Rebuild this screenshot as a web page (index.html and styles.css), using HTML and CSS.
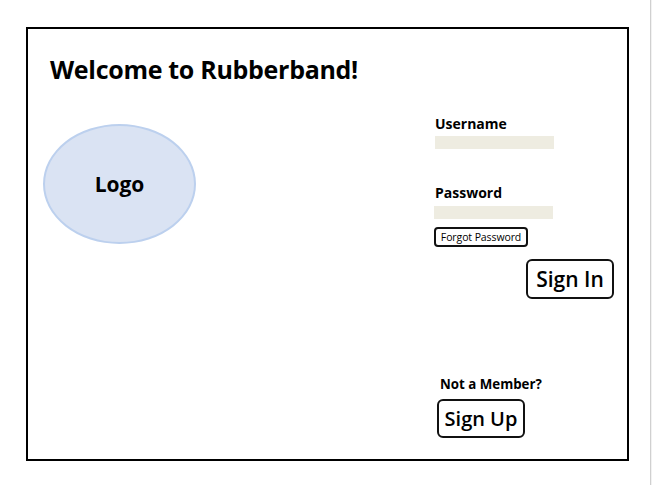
FILE: index.html
```html
<!DOCTYPE html>
<html lang="en">
<head>
<meta charset="utf-8">
<title>Welcome to Rubberband!</title>
<link rel="stylesheet" href="styles.css">
</head>
<body>
<div class="page">
  <main class="frame">
    <section class="left">
      <h1 class="title">Welcome to Rubberband!</h1>
      <div class="logo">Logo</div>
    </section>
    <section class="right">
      <label class="label user-label" for="username">Username</label>
      <input class="field user-field" id="username" type="text">
      <label class="label pass-label" for="password">Password</label>
      <input class="field pass-field" id="password" type="password">
      <button class="btn-small" type="button">Forgot Password</button>
      <button class="btn-big sign-in" type="button">Sign In</button>
      <p class="member">Not a Member?</p>
      <button class="btn-big sign-up" type="button">Sign Up</button>
    </section>
  </main>
</div>
</body>
</html>
```

FILE: styles.css
```css
* { box-sizing: border-box; }
html, body { margin: 0; padding: 0; }
body {
  background: #f2f2f2;
  font-family: "Open Sans", "Liberation Sans", sans-serif;
  color: #000;
}
.page {
  width: 651px;
  height: 485px;
  background: #fff;
  border-right: 1px solid #d0d0d0;
  padding: 27px 0 0 26px;
}
.frame {
  width: 603px;
  height: 434px;
  border: 2px solid #000;
  display: flex;
}
.left {
  width: 406px;
  padding: 24px 0 0 15px;
}
.title {
  margin: 0 0 0 7px;
  font-size: 25px;
  line-height: 32px;
  font-weight: 700;
  letter-spacing: -0.3px;
}
.logo {
  margin-top: 39px;
  width: 153px;
  height: 120px;
  border-radius: 50%;
  background: #dae3f3;
  border: 2px solid #bcd0ee;
  display: flex;
  align-items: center;
  justify-content: center;
  font-size: 21px;
  font-weight: 700;
}
.right {
  flex: 1;
  display: flex;
  flex-direction: column;
  align-items: flex-start;
  padding-top: 86px;
}
.label {
  display: block;
  font-size: 14px;
  line-height: 18px;
  font-weight: 700;
}
.user-label { margin-left: 1px; }
.pass-label { margin-top: 35px; margin-left: 1px; }
.field {
  display: block;
  width: 119px;
  height: 13px;
  border: none;
  padding: 0;
  background: #eeece1;
  outline: none;
}
.user-field { margin-top: 3px; margin-left: 1px; }
.pass-field { margin-top: 4px; }
.btn-small {
  margin-top: 8px;
  width: 94px;
  height: 20px;
  padding: 0;
  border: 2px solid #111;
  border-radius: 4px;
  background: #fff;
  font-family: "Open Sans", "Liberation Sans", sans-serif;
  font-size: 10.5px;
  line-height: 16px;
  letter-spacing: -0.1px;
  color: #000;
}
.btn-big {
  width: 88px;
  height: 40px;
  padding: 0;
  border: 2px solid #111;
  border-radius: 6px;
  background: #fff;
  font-family: "Open Sans", "Liberation Sans", sans-serif;
  font-size: 21px;
  font-weight: 600;
  color: #000;
}
.sign-in {
  margin-top: 12px;
  align-self: flex-end;
  margin-right: 13px;
}
.member {
  margin: 77px 0 0 6px;
  font-size: 13.3px;
  line-height: 17px;
  font-weight: 700;
}
.sign-up {
  margin-top: 6px;
  margin-left: 3px;
  height: 39px;
  font-size: 20px;
}
```
